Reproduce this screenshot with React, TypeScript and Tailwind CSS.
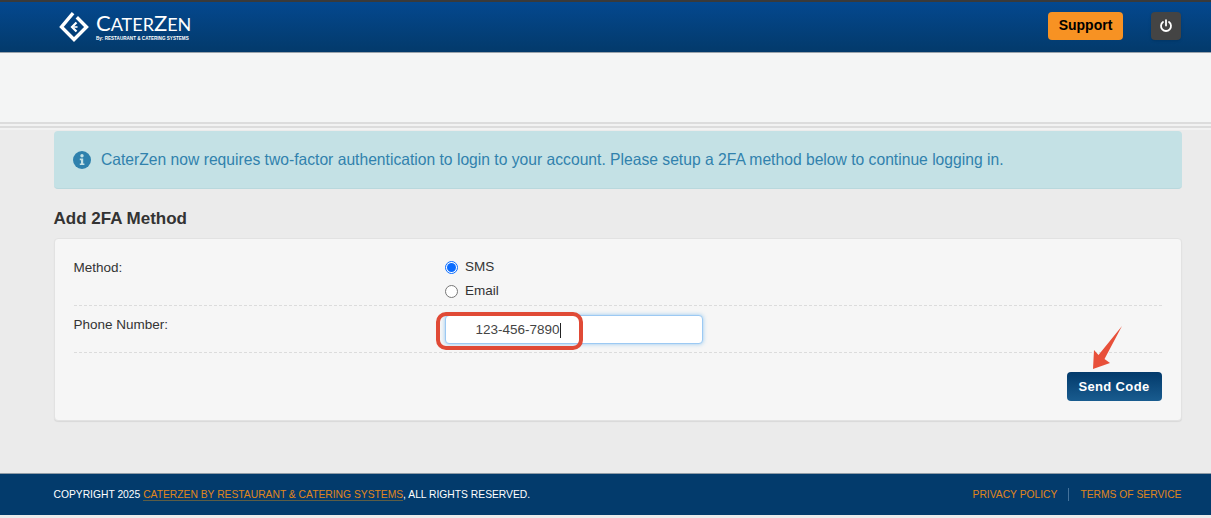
export default function App() {
  return (
    <div className="relative w-[1211px] h-[518px] overflow-hidden bg-[#ebebeb] text-[#333] font-['Liberation_Sans',Arial,sans-serif]">
      <header className="h-[53px] border-t-2 border-[#3a3a3a] bg-gradient-to-b from-[#04488f] to-[#033a6b] flex items-center justify-between pl-[59px] pr-[30px] border-b border-b-[#9aa3ab]">
        <div className="flex items-center gap-[7px]">
          <svg width="30" height="30" viewBox="0 0 30 30" fill="none" stroke="#fff" strokeWidth="3.4" className="mt-[-1px]">
            <path d="M13 2.5 L2.5 15 L15 27.5 L27.5 15 L19 6.5" strokeLinecap="square" />
            <path d="M17.5 10.5 L13 15 L17.5 19.5" strokeWidth="2.2" />
            <path d="M14.5 15 H18.5" strokeWidth="1.6" />
          </svg>
          <div className="text-white leading-none">
            <div className="text-[22px] leading-[22px] font-['Lato',sans-serif]">
              C<span className="text-[18px]">ATER</span>Z<span className="text-[18px]">EN</span>
            </div>
            <div className="text-[4.6px] leading-[6px] mt-[1px] font-bold whitespace-nowrap">By: RESTAURANT &amp; CATERING SYSTEMS</div>
          </div>
        </div>
        <div className="flex items-center gap-[28px] mt-[-3px]">
          <button className="w-[75px] h-[28px] rounded-[4px] bg-[#f79223] text-black text-[14px] font-bold">Support</button>
          <button className="w-[30px] h-[28px] rounded-[4px] bg-[#444] flex items-center justify-center shadow-sm">
            <svg width="14" height="14" viewBox="0 0 14 14" fill="none" stroke="#fff" strokeWidth="1.8" strokeLinecap="round">
              <path d="M7 1.2 V6.5" />
              <path d="M4 3 A5 5 0 1 0 10 3" />
            </svg>
          </button>
        </div>
      </header>

      <div className="h-[69px] bg-[#f4f5f5]" />
      <div className="h-[6px] bg-[#f2f2f2] border-y-2 border-[#dcdcdc]" />
      <div className="h-[2px] bg-[#f2f2f2]" />

      <main className="pl-[53.5px] pr-[29.5px] pt-[1px]">
        <div className="h-[58px] pt-[1px] rounded-[4px] bg-[#c4e1e5] border-b border-[#b9d8dd] flex items-center pl-[19.5px] gap-[10px] text-[#3182ad] text-[15.67px]">
          <svg width="18" height="18" viewBox="0 0 18 18" className="shrink-0">
            <circle cx="9" cy="9" r="9" fill="#2f81ad" />
            <circle cx="9" cy="4.8" r="1.7" fill="#c4e1e5" />
            <path d="M6.8 7.6 H10.2 V12.4 H11.4 V14 H6.8 V12.4 H8 V9.2 H6.8 Z" fill="#c4e1e5" />
          </svg>
          <span className="whitespace-nowrap">CaterZen now requires two-factor authentication to login to your account. Please setup a 2FA method below to continue logging in.</span>
        </div>

        <h2 className="mt-[19px] h-[21px] text-[17px] leading-[21px] font-bold text-[#333]">Add 2FA Method</h2>

        <section className="mt-[9px] h-[183px] rounded-[4px] bg-[#f6f6f6] border border-[#e2e2e2] shadow-[0_1px_1px_rgba(0,0,0,0.08)] px-[19px] text-[13.5px] text-[#333]">
          <div className="h-[67px] flex border-b border-dashed border-[#dcdcdc]">
            <label className="w-[371.5px] pt-[20px] leading-[18px]">Method:</label>
            <div className="pt-[19px] flex flex-col gap-[6px]">
              <div className="flex items-center h-[18px] gap-[7px] pt-[1px]">
                <span className="w-[13px] h-[13px] rounded-full border border-[#0a6cff] bg-white flex items-center justify-center">
                  <span className="w-[9px] h-[9px] rounded-full bg-[#0a6cff]" />
                </span>
                SMS
              </div>
              <div className="flex items-center h-[18px] gap-[7px] pt-[1px]">
                <span className="w-[13px] h-[13px] rounded-full border border-[#777] bg-white" />
                Email
              </div>
            </div>
          </div>
          <div className="h-[47px] flex border-b border-dashed border-[#dcdcdc]">
            <label className="w-[371.5px] pt-[10px] leading-[18px]">Phone Number:</label>
            <div className="pt-[9px]">
              <div className="w-[258px] h-[29px] rounded-[4px] bg-white border border-[#9cc9f3] shadow-[0_0_4px_rgba(82,168,236,0.6)] pl-[29.5px] pt-[1px] flex items-center text-[#444]">
                123-456-7890<span className="w-px h-[15px] bg-[#222]" />
              </div>
            </div>
          </div>
          <div className="flex justify-end pt-[19px]">
            <button className="w-[95px] h-[29px] rounded-[4px] bg-gradient-to-b from-[#033a6b] to-[#195c8f] text-white text-[13px] font-bold tracking-[0.35px]">Send Code</button>
          </div>
        </section>
      </main>

      <footer className="absolute left-0 right-0 top-[473px] h-[42px] bg-[#033b6c] border-t border-[#8f9ba6] flex items-center justify-between pl-[53.5px] pr-[29.5px] text-[10.3px] text-white">
        <div>
          COPYRIGHT 2025 <span className="text-[#e0861b] border-b border-[#5d5d45]">CATERZEN BY RESTAURANT &amp; CATERING SYSTEMS</span>, ALL RIGHTS RESERVED.
        </div>
        <div className="flex items-center text-[#e0861b]">
          <span>PRIVACY POLICY</span>
          <span className="w-px h-[13px] bg-[#44729b] mx-[11px]" />
          <span>TERMS OF SERVICE</span>
        </div>
      </footer>

      <div className="absolute left-[436px] top-[312px] w-[147px] h-[38px] rounded-[10px] border-[4px] border-[#e04a36]" />
      <svg className="absolute left-[1090px] top-[324px]" width="36" height="48" viewBox="0 0 36 48">
        <path d="M32 2 L14.5 35 L20 39 L3 45 L4 26 L8.5 31 Z" fill="#e8503a" />
      </svg>
    </div>
  );
}
